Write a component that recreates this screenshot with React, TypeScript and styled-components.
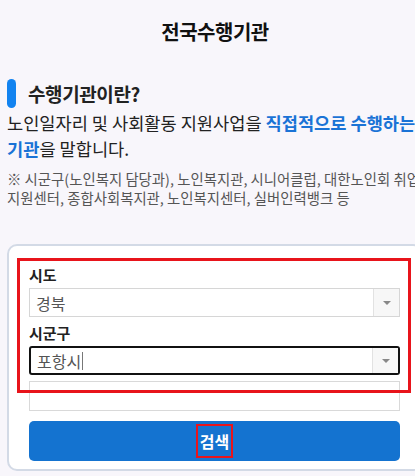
import React from "react";
import styled, { createGlobalStyle } from "styled-components";

const GlobalStyle = createGlobalStyle`
    html, body {
        margin: 0;
        padding: 0;
        background: #f8f6fb;
        overflow: hidden;
    }
    body {
        font-family: "Noto Sans CJK KR", "Noto Sans", sans-serif;
        color: #222;
    }
`;

const Page = styled.div`
    width: 430px;
    box-sizing: border-box;
    padding: 0 7px;
`;

const Title = styled.h1`
    margin: 0;
    padding-top: 18px;
    height: 60px;
    box-sizing: border-box;
    text-align: center;
    font-size: 20px;
    line-height: 28px;
    font-weight: 700;
    letter-spacing: -0.5px;
    color: #111;
`;

const SectionHead = styled.div`
    display: flex;
    align-items: center;
    gap: 12px;
    margin-top: 18px;
    height: 30px;
`;

const Bar = styled.span`
    width: 9px;
    height: 29px;
    border-radius: 5px;
    background: #1283f0;
`;

const SectionTitle = styled.h2`
    margin: 0;
    font-size: 19px;
    font-weight: 700;
    letter-spacing: -0.4px;
    color: #222;
`;

const Desc = styled.p`
    margin: 2px 0 0;
    font-size: 17.6px;
    line-height: 26px;
    color: #222;
`;

const Em = styled.strong`
    color: #1a73d6;
    font-weight: 700;
`;

const Note = styled.p`
    margin: 7px 0 0;
    font-size: 14.4px;
    line-height: 19px;
    color: #555;
`;

const Card = styled.div`
    position: relative;
    margin-top: 37px;
    background: #fff;
    border: 2px solid #d3dae6;
    border-radius: 10px;
    padding: 17px 21px 8px 20px;
`;

// red annotation frame drawn over the two select fields
const Marker = styled.div`
    position: absolute;
    top: 12px;
    left: 8px;
    right: 10px;
    height: 135px;
    box-sizing: border-box;
    border: 3px solid #e8141b;
    pointer-events: none;
`;

const Label = styled.div`
    font-size: 15px;
    font-weight: 700;
    line-height: 24px;
    color: #222;
    margin-bottom: 1px;
`;

const Select = styled.div<{ $focused?: boolean }>`
    display: flex;
    height: 29px;
    box-sizing: border-box;
    border: ${(p) => (p.$focused ? "2px solid #111" : "1px solid #d6d6d6")};
    border-radius: ${(p) => (p.$focused ? "3px" : "0")};
    background: #fff;
    margin-bottom: ${(p) => (p.$focused ? "6px" : "4px")};
`;

const Value = styled.div`
    flex: 1;
    display: flex;
    align-items: center;
    padding-left: 6px;
    font-size: 16px;
    color: #555;
`;

const Caret = styled.span`
    display: inline-block;
    width: 1px;
    height: 18px;
    background: #777;
    margin-left: 1px;
`;

const Arrow = styled.div`
    width: 25px;
    border-left: 1px solid #e2e2e2;
    background: #f7f7f7;
    display: flex;
    align-items: center;
    justify-content: center;
    &::after {
        content: "";
        border-left: 4px solid transparent;
        border-right: 4px solid transparent;
        border-top: 4px solid #888;
    }
`;

const Empty = styled.div`
    height: 30px;
    box-sizing: border-box;
    border: 1px solid #d9d9d9;
`;

const Button = styled.button`
    display: flex;
    align-items: center;
    justify-content: center;
    width: 100%;
    height: 40px;
    margin-top: 10px;
    border: none;
    border-radius: 5px;
    background: #1473d0;
    font-family: inherit;
    cursor: pointer;
`;

const ButtonText = styled.span`
    border: 2px solid #e8141b;
    padding: 2px 2px;
    font-size: 16px;
    font-weight: 700;
    line-height: 26px;
    color: #fff;
`;

export default function App() {
    return (
        <>
            <GlobalStyle />
            <Page>
                <Title>전국수행기관</Title>
                <SectionHead>
                    <Bar />
                    <SectionTitle>수행기관이란?</SectionTitle>
                </SectionHead>
                <Desc>
                    노인일자리 및 사회활동 지원사업을 <Em>직접적으로 수행하는 기관</Em>을 말합니다.
                </Desc>
                <Note>
                    ※ 시군구(노인복지 담당과), 노인복지관, 시니어클럽, 대한노인회 취업지원센터, 종합사회복지관, 노인복지센터, 실버인력뱅크 등
                </Note>
                <Card>
                    <Label>시도</Label>
                    <Select>
                        <Value>경북</Value>
                        <Arrow />
                    </Select>
                    <Label>시군구</Label>
                    <Select $focused>
                        <Value>
                            포항시
                            <Caret />
                        </Value>
                        <Arrow />
                    </Select>
                    <Empty />
                    <Button>
                        <ButtonText>검색</ButtonText>
                    </Button>
                    <Marker />
                </Card>
            </Page>
        </>
    );
}
